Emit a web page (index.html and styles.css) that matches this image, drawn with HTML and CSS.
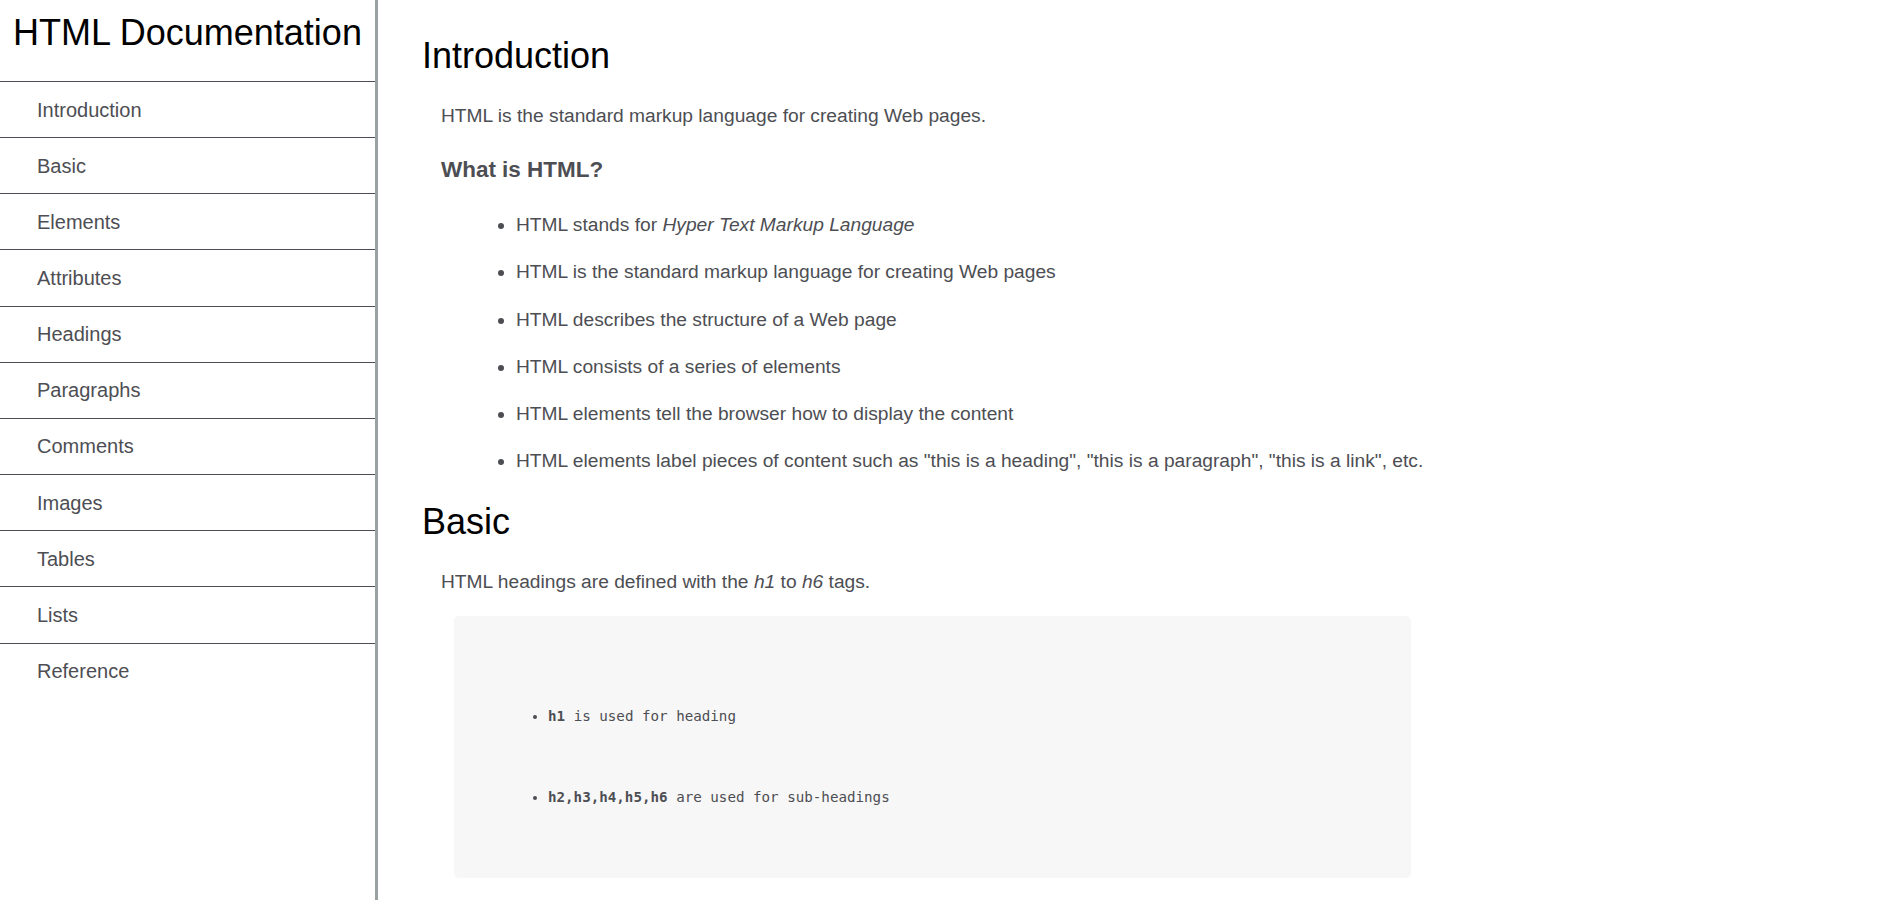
FILE: index.html
```html
<!DOCTYPE html>
<html lang="en">
<head>
<meta charset="utf-8">
<title>HTML Documentation</title>
<link rel="stylesheet" href="styles.css">
</head>
<body>
<nav class="navbar" id="navbar">
  <header class="nav-title">HTML Documentation</header>
  <ul class="nav-list">
    <li><a class="nav-link" href="#Introduction">Introduction</a></li>
    <li><a class="nav-link" href="#Basic">Basic</a></li>
    <li><a class="nav-link" href="#Elements">Elements</a></li>
    <li><a class="nav-link" href="#Attributes">Attributes</a></li>
    <li><a class="nav-link" href="#Headings">Headings</a></li>
    <li><a class="nav-link" href="#Paragraphs">Paragraphs</a></li>
    <li><a class="nav-link" href="#Comments">Comments</a></li>
    <li><a class="nav-link" href="#Images">Images</a></li>
    <li><a class="nav-link" href="#Tables">Tables</a></li>
    <li><a class="nav-link" href="#Lists">Lists</a></li>
    <li><a class="nav-link" href="#Reference">Reference</a></li>
  </ul>
</nav>
<main class="main-doc" id="main-doc">
  <section class="main-section" id="Introduction">
    <header class="section-title">Introduction</header>
    <article class="section-body">
      <p class="para">HTML is the standard markup language for creating Web pages.</p>
      <h3 class="sub-title">What is HTML?</h3>
      <ul class="bullets">
        <li>HTML stands for <em>Hyper Text Markup Language</em></li>
        <li>HTML is the standard markup language for creating Web pages</li>
        <li>HTML describes the structure of a Web page</li>
        <li>HTML consists of a series of elements</li>
        <li>HTML elements tell the browser how to display the content</li>
        <li>HTML elements label pieces of content such as "this is a heading", "this is a paragraph", "this is a link", etc.</li>
      </ul>
    </article>
  </section>
  <section class="main-section" id="Basic">
    <header class="section-title">Basic</header>
    <article class="section-body">
      <p class="para">HTML headings are defined with the <em>h1</em> to <em>h6</em> tags.</p>
      <div class="code-block">
        <ul class="code-list">
          <li><b>h1</b> is used for heading</li>
          <li><b>h2,h3,h4,h5,h6</b> are used for sub-headings</li>
        </ul>
      </div>
    </article>
  </section>
</main>
</body>
</html>
```

FILE: styles.css
```css
html, body {
  margin: 0;
  padding: 0;
}

body {
  display: flex;
  align-items: flex-start;
  font-family: "Liberation Sans", Arial, sans-serif;
  color: #4d4e53;
  background: #ffffff;
}

.navbar {
  position: sticky;
  top: 0;
  flex: 0 0 375px;
  width: 375px;
  height: 100vh;
  border-right: 3px solid #99a1a2;
  box-sizing: content-box;
}

.nav-title {
  padding: 12px 0 28px;
  font-size: 36px;
  line-height: 41px;
  color: #000000;
  text-align: center;
  border-bottom: 1px solid #4d4e53;
}

.nav-list {
  list-style: none;
  margin: 0;
  padding: 0;
}

.nav-list li + li {
  border-top: 1px solid #4d4e53;
}

.nav-link {
  display: block;
  padding: 16.5px 0 16.5px 37px;
  font-size: 20px;
  line-height: 22.16px;
  color: #4d4e53;
  text-decoration: none;
}

.main-doc {
  flex: 1 1 auto;
  padding: 35px 0 40px 44px;
}

.section-title {
  font-size: 36px;
  line-height: 42px;
  color: #000000;
  margin: 0 0 28px;
}

.section-body {
  padding-left: 19px;
  font-size: 19.2px;
  line-height: 22px;
}

.para {
  margin: 0;
}

.sub-title {
  margin: 31px 0 0;
  font-size: 22.46px;
  line-height: 24px;
  font-weight: bold;
  color: #4d4e53;
}

.bullets {
  margin: 32px 0 0;
  padding-left: 75px;
}

.bullets li + li {
  margin-top: 25.3px;
}

#Basic {
  margin-top: 29px;
}

.code-block {
  margin: 23px 0 0 13px;
  width: 957px;
  box-sizing: border-box;
  padding: 90px 0 71px 54px;
  background: #f7f7f7;
  border-radius: 5px;
  font-family: "DejaVu Sans Mono", "Liberation Mono", monospace;
  font-size: 14.2px;
  line-height: 20px;
  color: #4d4e53;
}

.code-list {
  margin: 0;
  padding-left: 40px;
}

.code-list li + li {
  margin-top: 61px;
}
```
